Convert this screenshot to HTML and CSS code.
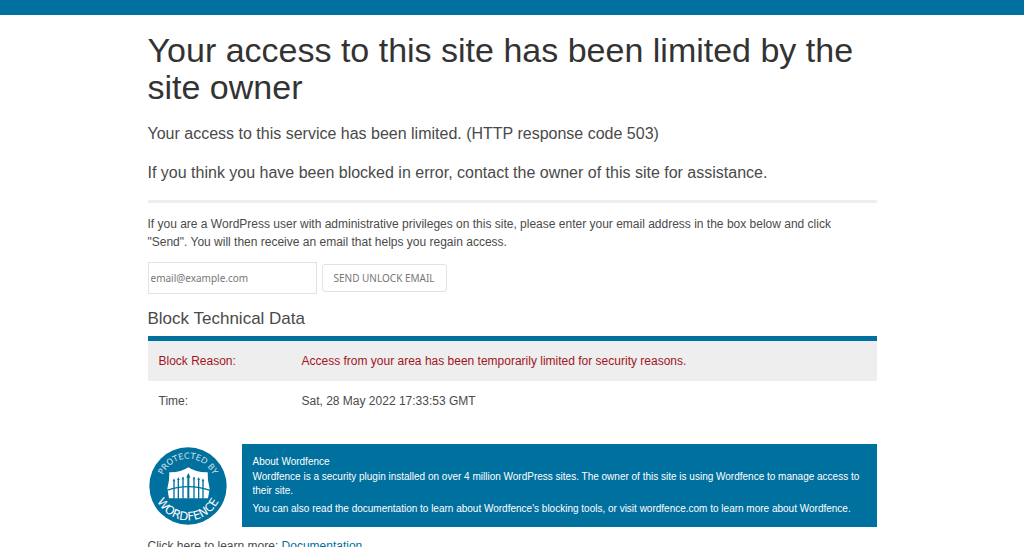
FILE: index.html
```html
<!DOCTYPE html>
<html lang="en">

<head>
    <meta charset="UTF-8">
    <meta name="viewport" content="width=device-width, initial-scale=1.0">
    <title>Your access to this site has been limited</title>
    <link rel="stylesheet" href="styles.css">
</head>

<body>

    <div class="topbar"></div>

    <main class="container">
        <h1>Your access to this site has been limited by the site owner</h1>
        <p class="lead">Your access to this service has been limited. (HTTP response code 503)</p>
        <p class="lead">If you think you have been blocked in error, contact the owner of this site for assistance.</p>

        <hr class="divider">

        <form class="unlock">
            <p><label for="email">If you are a WordPress user with administrative privileges on this site, please enter your
                email address in the box below and click<br> "Send". You will then receive an email that helps you regain
                access.</label></p>
            <div class="unlock-row">
                <input class="email" id="email" type="email" placeholder="email@example.com">
                <button class="btn" type="submit">SEND UNLOCK EMAIL</button>
            </div>
        </form>

        <h2>Block Technical Data</h2>
        <table class="block-data">
            <tr class="reason">
                <th scope="row">Block Reason:</th>
                <td>Access from your area has been temporarily limited for security reasons.</td>
            </tr>
            <tr>
                <th scope="row">Time:</th>
                <td>Sat, 28 May 2022 17:33:53 GMT</td>
            </tr>
        </table>

        <section class="about">
            <svg class="badge" viewBox="0 0 240 240" role="img" aria-label="Protected by Wordfence">
                <defs>
                    <path id="arc-top" d="M38 120 A82 82 0 0 1 202 120" />
                    <path id="arc-bottom" d="M17 120 A103 103 0 0 0 223 120" />
                </defs>
                <circle cx="120" cy="120" r="116" fill="#00709e" />
                <text class="badge-top" text-anchor="middle"><textPath href="#arc-top" startOffset="50%">PROTECTED BY</textPath></text>
                <text class="badge-bottom" text-anchor="middle"><textPath href="#arc-bottom" startOffset="50%">WORDFENCE</textPath></text>
                <!-- fence: white panel, blue gaps and rail -->
                <path d="M64 79 Q98 80 121 64 Q144 80 179 79 Q178 104 185 128 L180 157 H63 L58 128 Q65 104 64 79 Z" fill="#fff" />
                <g stroke="#00709e" stroke-width="4" fill="none">
                    <path d="M78 104 V158 M91 100 V158 M105 98 V158 M138 98 V158 M152 100 V158 M165 104 V158" />
                    <path d="M121 88 V158" stroke-width="6" />
                    <path d="M54 134 Q121 110 188 134" />
                </g>
                <path d="M121 80 L127 95 H115 Z M78 97 l4 9 h-8 Z M91 93 l4 9 h-8 Z M105 91 l4 9 h-8 Z M138 91 l4 9 h-8 Z M152 93 l4 9 h-8 Z M165 97 l4 9 h-8 Z" fill="#00709e" />
            </svg>
            <div class="about-text">
                <h3>About Wordfence</h3>
                <p>Wordfence is a security plugin installed on over 4 million WordPress sites. The owner of this site is
                    using Wordfence to manage access to their site.</p>
                <p>You can also read the documentation to learn about Wordfence's blocking tools, or visit
                    wordfence.com to learn more about Wordfence.</p>
            </div>
        </section>

        <p class="learn">Click here to learn more: <a href="#">Documentation</a></p>
    </main>

</body>

</html>
```

FILE: styles.css
```css
* {
    box-sizing: border-box;
}

body {
    margin: 0;
    font-family: "Liberation Sans", Arial, sans-serif;
    font-size: 12px;
    line-height: 18px;
    color: #4a4a4a;
    background-color: #fff;
}

.topbar {
    height: 15px;
    background-color: #00709e;
}

.container {
    max-width: 729px;
    margin: 0 auto;
    padding-top: 17px;
}

h1 {
    margin: 0 0 16px;
    font-size: 34px;
    line-height: 37px;
    font-weight: normal;
    color: #333;
}

.lead {
    margin: 0 0 15px;
    font-size: 16px;
    line-height: 24px;
}

.divider {
    height: 3px;
    margin: 0 0 12px;
    border: 0;
    background-color: #eee;
}

.unlock p {
    margin: 0 0 11px;
}

.unlock-row {
    display: flex;
    align-items: center;
    gap: 5px;
}

.email,
.btn {
    font-family: "Noto Sans", sans-serif;
    font-size: 10px;
    color: #777;
    background-color: #fff;
    border: 1px solid #e2e2e2;
}

.email {
    width: 169px;
    height: 32px;
    padding: 0 2px;
}

.email::placeholder {
    color: #777;
}

.btn {
    height: 28px;
    padding: 0 11px;
    border-radius: 3px;
}

h2 {
    margin: 12px 0 4px;
    font-size: 17px;
    line-height: 26px;
    font-weight: normal;
}

.block-data {
    width: 100%;
    border-collapse: collapse;
    border-top: 5px solid #00709e;
}

.block-data th,
.block-data td {
    padding: 11px;
    font-weight: normal;
    text-align: left;
}

.block-data th {
    width: 143px;
}

.reason {
    color: #a2151c;
    background-color: #eee;
}

.about {
    display: flex;
    align-items: center;
    gap: 14px;
    margin-top: 23px;
}

.badge {
    flex: none;
    width: 80px;
    height: 80px;
}

.badge text {
    font-family: "DejaVu Sans", sans-serif;
    fill: #fff;
}

.badge-top {
    font-size: 25px;
    opacity: .8;
}

.badge-bottom {
    font-size: 35px;
}

.about-text {
    flex: 1;
    padding: 11px;
    font-size: 10px;
    line-height: 14px;
    color: #fff;
    background-color: #00709e;
}

.about-text h3 {
    margin: 0 0 1px;
    font-size: 10px;
    font-weight: normal;
}

.about-text p {
    margin: 0 0 4px;
}

.about-text p:last-child {
    margin-bottom: 0;
}

.learn {
    margin: 10px 0;
}

.learn a {
    color: #00709e;
}
```
